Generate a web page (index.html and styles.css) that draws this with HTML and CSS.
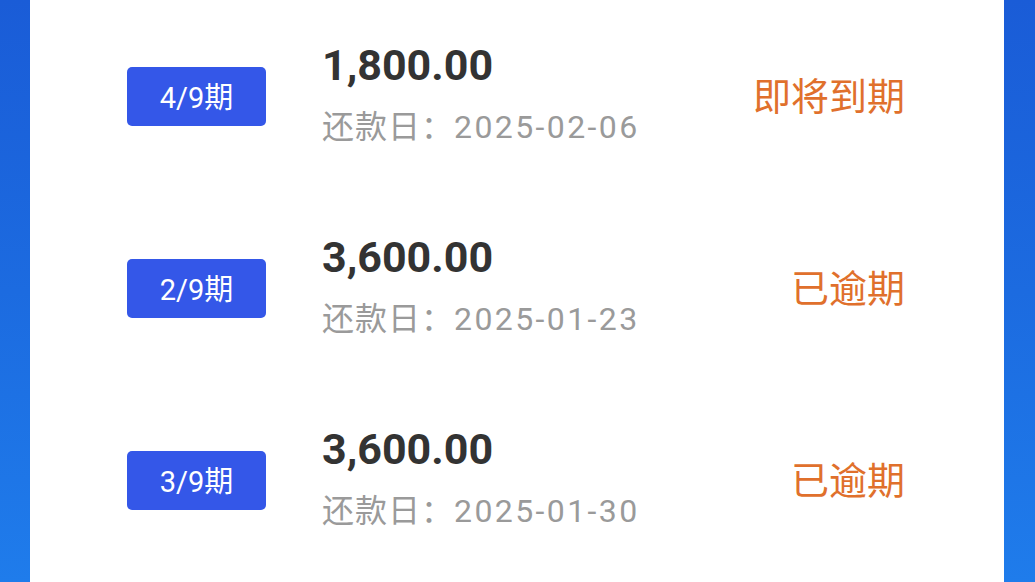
FILE: index.html
```html
<!DOCTYPE html>
<html lang="zh-CN">
<head>
<meta charset="utf-8">
<link rel="stylesheet" href="styles.css">
</head>
<body>
<div class="page">
  <div class="card">
    <div class="row">
      <div class="badge">4/9期</div>
      <div class="info">
        <div class="amount">1,800.00</div>
        <div class="date"><span class="cjk">还款日：</span><span class="num">2025-02-06</span></div>
      </div>
      <div class="status">即将到期</div>
    </div>
    <div class="row">
      <div class="badge">2/9期</div>
      <div class="info">
        <div class="amount">3,600.00</div>
        <div class="date"><span class="cjk">还款日：</span><span class="num">2025-01-23</span></div>
      </div>
      <div class="status">已逾期</div>
    </div>
    <div class="row">
      <div class="badge">3/9期</div>
      <div class="info">
        <div class="amount">3,600.00</div>
        <div class="date"><span class="cjk">还款日：</span><span class="num">2025-01-30</span></div>
      </div>
      <div class="status">已逾期</div>
    </div>
  </div>
</div>
</body>
</html>
```

FILE: styles.css
```css
* { box-sizing: border-box; }
html, body { margin: 0; padding: 0; }
body {
  width: 1035px;
  height: 582px;
  overflow: hidden;
  font-family: Roboto, "Noto Sans CJK SC", sans-serif;
}
.page {
  height: 582px;
  background: linear-gradient(180deg, #1a5cd7 0%, #1c6be0 50%, #1f7ceb 100%);
  padding: 0 31px 0 30px;
}
.card {
  background: #ffffff;
  height: 100%;
  padding: 0 99px 0 97px;
  display: flex;
  flex-direction: column;
}
.row {
  height: 192px;
  display: flex;
  align-items: center;
}
.badge {
  width: 139px;
  height: 59px;
  background: #3457e8;
  border-radius: 5px;
  color: #ffffff;
  font-size: 29px;
  display: flex;
  align-items: center;
  justify-content: center;
  margin-top: 1px;
  padding-bottom: 3px;
}
.info {
  margin-left: 56px;
  flex: 1;
  display: flex;
  flex-direction: column;
  margin-bottom: 4px;
}
.amount {
  font-size: 43px;
  font-weight: 700;
  color: #333333;
  line-height: 50px;
}
.date {
  font-size: 32px;
  color: #9a9a9a;
  line-height: 44px;
  margin-top: 12px;
}
.date .cjk { font-family: "Noto Sans CJK SC", sans-serif; letter-spacing: 1px; }
.date .num { letter-spacing: 2.4px; }
.status {
  font-family: "Noto Sans CJK SC", sans-serif;
  font-size: 38px;
  color: #e0702c;
  margin-bottom: 6px;
}
```
